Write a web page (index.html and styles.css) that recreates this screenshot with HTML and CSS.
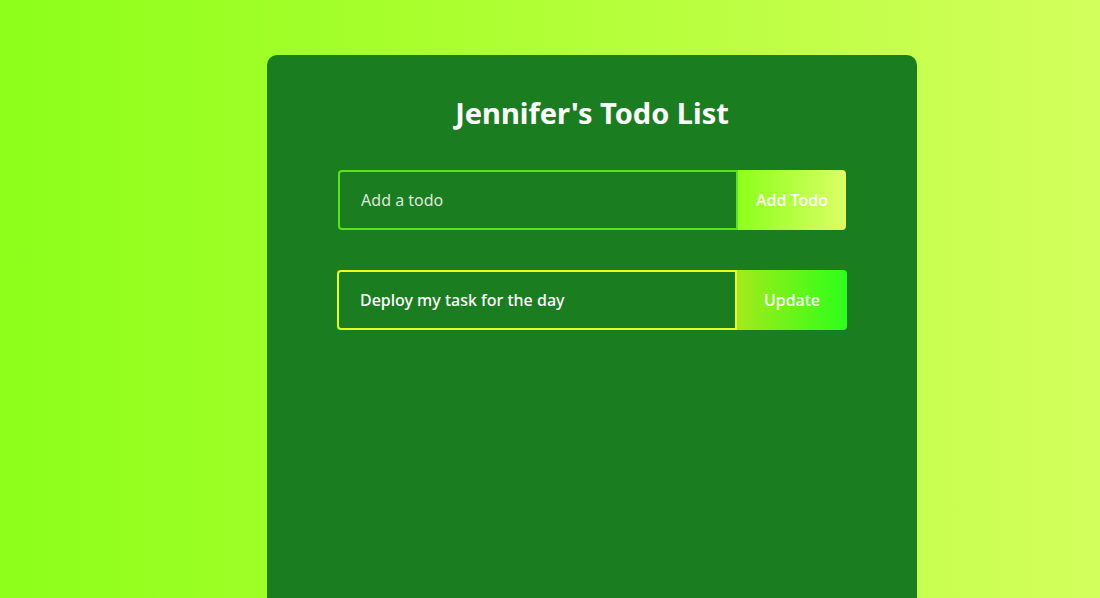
FILE: index.html
```html
<!DOCTYPE html>
<html lang="en">
<head>
<meta charset="utf-8">
<title>Jennifer's Todo List</title>
<link rel="stylesheet" href="styles.css">
</head>
<body>
<div class="todo-app">
  <h1 class="title">Jennifer's Todo List</h1>
  <form class="todo-form">
    <input class="todo-input" type="text" placeholder="Add a todo">
    <button class="todo-button" type="button">Add Todo</button>
  </form>
  <form class="todo-form">
    <input class="todo-input edit" type="text" value="Deploy my task for the day" autofocus>
    <button class="todo-button edit" type="button">Update</button>
  </form>
</div>
</body>
</html>
```
FILE: styles.css
```css
* { box-sizing: border-box; }
html, body { height: 100%; }
body {
  margin: 0;
  font-family: "Noto Sans", "DejaVu Sans", sans-serif;
  background: linear-gradient(90deg, #8cff1a 0%, #aaff2e 40%, #d3ff5c 100%);
  overflow: hidden;
}
.todo-app {
  width: 650px;
  min-height: 620px;
  margin: 55px 0 0 267px;
  background: #1a7e20;
  border-radius: 10px;
  padding: 38px 0 0;
  display: flex;
  flex-direction: column;
  align-items: center;
}
.title {
  margin: 0 0 37px;
  color: #fff;
  font-size: 29px;
  font-weight: 700;
  line-height: 40px;
}
.todo-form {
  display: flex;
  margin-bottom: 40px;
}
.todo-input {
  width: 400px;
  height: 60px;
  padding: 0 20px 1px 21px;
  border: 2px solid #5de21c;
  border-radius: 4px 0 0 4px;
  background: transparent;
  color: #fff;
  font-family: inherit;
  font-size: 16px;
  outline: none;
}
.todo-input::placeholder { color: #dfe6dc; }
.todo-input.edit {
  border-color: #e8ff1c;
  font-weight: 500;
  caret-color: #fff;
}
.todo-button {
  height: 60px;
  padding: 0 18px;
  border: none;
  border-radius: 0 4px 4px 0;
  background: linear-gradient(90deg, #8cff1a 0%, #dbff66 100%);
  color: #fff;
  font-family: inherit;
  font-size: 16px;
  font-weight: 500;
}
.todo-button.edit {
  padding: 0 27px;
  background: linear-gradient(90deg, #a4ea1a 0%, #2cff1a 100%);
}
```
